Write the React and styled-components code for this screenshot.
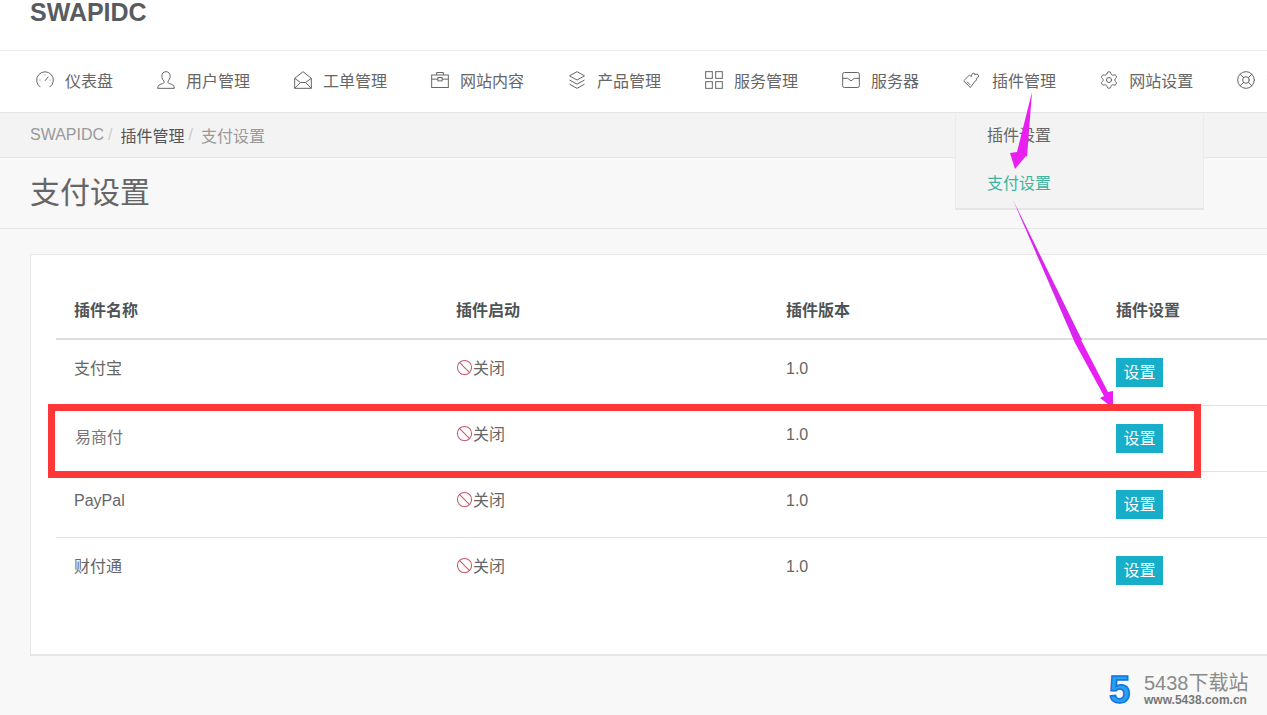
import React from 'react';
import styled, { createGlobalStyle } from 'styled-components';
import { Ban, LifeBuoy, Settings } from 'lucide-react';

const GlobalStyle = createGlobalStyle`
    html, body {
        margin: 0;
        padding: 0;
        overflow: hidden;
        background: #f8f8f8;
        font-family: "Liberation Sans", "Noto Sans CJK SC", sans-serif;
        font-size: 16px;
        color: #666;
    }
`;

const Page = styled.div`
    position: relative;
    width: 1267px;
    height: 715px;
    overflow: hidden;
`;

const Brand = styled.header`
    height: 50px;
    box-sizing: border-box;
    padding-left: 30px;
    background: #fff;
    font-size: 25px;
    line-height: 24px;
    font-weight: 700;
    color: #585c60;
`;

const Nav = styled.nav`
    display: flex;
    align-items: center;
    height: 63px;
    box-sizing: border-box;
    padding-left: 36px;
    gap: 44px;
    background: #fff;
    border-top: 1px solid #ececec;
    border-bottom: 1px solid #e4e4e4;
    white-space: nowrap;
    position: relative;
`;

const NavItem = styled.a`
    display: flex;
    align-items: center;
    flex: none;
    gap: 10px;
    line-height: 24px;
    color: #666;

    svg {
        display: block;
        flex: none;
        width: 20px;
        height: 20px;
        margin: -4px 0 0 -1px;
        stroke: #666;
        stroke-width: 1.2;
        fill: none;
    }
`;

const Breadcrumb = styled.div`
    display: flex;
    align-items: center;
    height: 45px;
    box-sizing: border-box;
    padding-left: 30px;
    background: #f3f3f3;
    border-bottom: 1px solid #e7e7e7;
    color: #999;
`;

const Crumb = styled.span`
    color: ${(props) => (props.$active ? '#555' : '#999')};
`;

const Slash = styled.span`
    padding: 0 8px 0 4px;
    color: #ccc;
`;

const TitleBar = styled.div`
    height: 71px;
    box-sizing: border-box;
    padding-left: 30px;
    background: #f8f8f8;
    border-bottom: 1px solid #e7e7e7;
    font-size: 30px;
    line-height: 70px;
    color: #666;
`;

const Card = styled.section`
    width: 1300px;
    height: 402px;
    box-sizing: border-box;
    margin: 25px 0 0 30px;
    padding: 25px;
    background: #fff;
    border: 1px solid #e7e7e7;
    border-bottom-width: 2px;
`;

const Table = styled.table`
    width: 1250px;
    table-layout: fixed;
    border-collapse: separate;
    border-spacing: 0;
    text-align: left;
`;

const Th = styled.th`
    width: ${(props) => props.$width || 'auto'};
    height: 60px;
    padding: 0 18px;
    box-sizing: border-box;
    border-bottom: 2px solid #ddd;
    font-weight: 700;
    color: #4e5456;
`;

const Td = styled.td`
    height: 66px;
    box-sizing: border-box;
    padding: ${(props) => (props.$retouched ? '20px 19px 0' : '17px 18px 0')};
    vertical-align: top;
    line-height: 24px;
    color: ${(props) => (props.$retouched ? '#777' : '#666')};
    border-bottom: 1px solid ${(props) => (props.$last ? 'transparent' : '#e2e2e2')};
`;

const Status = styled.span`
    display: flex;
    align-items: center;

    svg {
        flex: none;
        margin-top: -3px;
    }
`;

const SetButton = styled.button`
    display: block;
    width: 47px;
    height: 29px;
    margin-top: 1px;
    padding: 0;
    border: 0;
    background: #17aec9;
    color: #fff;
    font: inherit;
    line-height: 29px;
`;

const Dropdown = styled.div`
    position: absolute;
    left: 955px;
    top: 114px;
    width: 249px;
    height: 96px;
    box-sizing: border-box;
    padding: 10px 31px 0;
    background: #f3f3f3;
    border: 1px solid #ececec;
    border-top: 0;
    border-bottom: 2px solid #e4e4e4;
`;

const DropdownItem = styled.div`
    height: 48px;
    line-height: 24px;
    color: ${(props) => (props.$active ? '#3fb39b' : '#666')};
`;

const Overlay = styled.svg`
    position: absolute;
    left: 0;
    top: 0;
    pointer-events: none;
`;

const Watermark = styled.div`
    position: absolute;
    left: 1109px;
    top: 672px;
    display: flex;
    gap: 10px;
`;

const WatermarkFive = styled.span`
    width: 25px;
    font-size: 38px;
    line-height: 36px;
    font-weight: 700;
    color: #27a0f2;
    -webkit-text-stroke: 1.5px #0f74e0;
`;

const WatermarkText = styled.div`
    display: flex;
    flex-direction: column;
    padding-top: 1px;
    color: #8a8a8a;
`;

const WatermarkName = styled.span`
    font-size: 20px;
    line-height: 21px;
`;

const WatermarkUrl = styled.span`
    font-size: 12px;
    line-height: 12px;
    font-weight: 700;
    color: #777;
`;

const icons = {
    gauge: (
        <svg viewBox="0 0 24 24">
            <path d="M6.5 20.500a10 10 0 1 1 11 0" />
            <path d="M12 13l4-5M12 5.500v1M5.500 12h1M18.500 12h-1" />
        </svg>
    ),
    user: (
        <svg viewBox="0 0 24 24">
            <path d="M12 2C8.800 2 7 4.400 7 7.500c0 2.600 1.200 4.600 2.600 5.700v1.600c0 .8-.8 1.200-1.800 1.600C5 17 2 18 2 22h20c0-4-3-5-5.800-5.600-1-.4-1.800-.8-1.800-1.600v-1.600C15.800 12.100 17 10 17 7.500 17 4.400 15.200 2 12 2z" />
        </svg>
    ),
    mail: (
        <svg viewBox="0 0 24 24">
            <path d="M2 10l10-8 10 8v12H2z" />
            <path d="M2 22l7-7h6l7 7M2 10l7 5M22 10l-7 5" />
        </svg>
    ),
    case: (
        <svg viewBox="0 0 24 24">
            <rect x="2" y="6" width="20" height="15" />
            <path d="M8 6V3h8v3M2 11h7.500M14.500 11H22" />
            <rect x="9.500" y="9" width="5" height="4" />
        </svg>
    ),
    layers: (
        <svg viewBox="0 0 24 24">
            <path d="M12 2l9 5-9 5-9-5z" />
            <path d="M3 12l9 5 9-5M3 17l9 5 9-5" />
        </svg>
    ),
    grid: (
        <svg viewBox="0 0 24 24">
            <rect x="2" y="2" width="8" height="8" />
            <rect x="14" y="2" width="8" height="8" />
            <rect x="2" y="14" width="8" height="8" />
            <rect x="14" y="14" width="8" height="8" />
        </svg>
    ),
    inbox: (
        <svg viewBox="0 0 24 24">
            <rect x="2" y="3" width="20" height="18" rx="2" />
            <path d="M2 10h6l4 3 4-3h6" />
        </svg>
    ),
    plugin: (
        <svg viewBox="0 0 24 24">
            <path d="M2 13l7-7 2 2c1-1 0-3 2-4s3 1 2 2c2-2 5-1 5 1s-2 3-3 3c1 2 0 3-1 3l-6 8z" />
            <path d="M6 14l4 4" />
        </svg>
    ),
    settings: <Settings />,
    support: <LifeBuoy />,
};

const menu = [
    ['gauge', '仪表盘'],
    ['user', '用户管理'],
    ['mail', '工单管理'],
    ['case', '网站内容'],
    ['layers', '产品管理'],
    ['grid', '服务管理'],
    ['inbox', '服务器'],
    ['plugin', '插件管理'],
    ['settings', '网站设置'],
    ['support', '帮助中心'],
];

const plugins = [
    { name: '支付宝' },
    { name: '易商付', retouched: true },
    { name: 'PayPal' },
    { name: '财付通' },
];

export default function App() {
    return (
        <Page>
            <GlobalStyle />
            <Brand>SWAPIDC</Brand>
            <Nav>
                {menu.map(([icon, label]) => (
                    <NavItem key={label}>
                        {icons[icon]}
                        {label}
                    </NavItem>
                ))}
            </Nav>
            <Breadcrumb>
                <Crumb>SWAPIDC</Crumb>
                <Slash>/</Slash>
                <Crumb $active>插件管理</Crumb>
                <Slash>/</Slash>
                <Crumb>支付设置</Crumb>
            </Breadcrumb>
            <TitleBar>支付设置</TitleBar>
            <Card>
                <Table>
                    <thead>
                        <tr>
                            <Th $width="382px">插件名称</Th>
                            <Th $width="330px">插件启动</Th>
                            <Th $width="330px">插件版本</Th>
                            <Th>插件设置</Th>
                        </tr>
                    </thead>
                    <tbody>
                        {plugins.map((plugin, index) => {
                            const last = index === plugins.length - 1;
                            return (
                                <tr key={plugin.name}>
                                    <Td $last={last} $retouched={plugin.retouched}>
                                        {plugin.name}
                                    </Td>
                                    <Td $last={last}>
                                        <Status>
                                            <Ban size={17} strokeWidth={1.5} color="#c9566c" />
                                            关闭
                                        </Status>
                                    </Td>
                                    <Td $last={last}>1.0</Td>
                                    <Td $last={last}>
                                        <SetButton>设置</SetButton>
                                    </Td>
                                </tr>
                            );
                        })}
                    </tbody>
                </Table>
            </Card>
            <Dropdown>
                <DropdownItem>插件设置</DropdownItem>
                <DropdownItem $active>支付设置</DropdownItem>
            </Dropdown>
            <Overlay width="1267" height="715" viewBox="0 0 1267 715">
                <polygon fill="#e81ff0" points="1032,92 1027,157 1026,156 1015,169 1010,153 1017,152" />
                <polygon fill="#d926ee" points="1013,200 1082,340 1075,343 1013,200" />
                <polygon fill="#e81ff0" points="1080,338 1108,392 1113,391 1113,408 1100,398 1104,396 1075,343" />
                <rect x="51.500" y="407.500" width="1146" height="67" fill="none" stroke="#ff3737" strokeWidth="7" />
            </Overlay>
            <Watermark>
                <WatermarkFive>5</WatermarkFive>
                <WatermarkText>
                    <WatermarkName>5438下载站</WatermarkName>
                    <WatermarkUrl>www.5438.com.cn</WatermarkUrl>
                </WatermarkText>
            </Watermark>
        </Page>
    );
}
